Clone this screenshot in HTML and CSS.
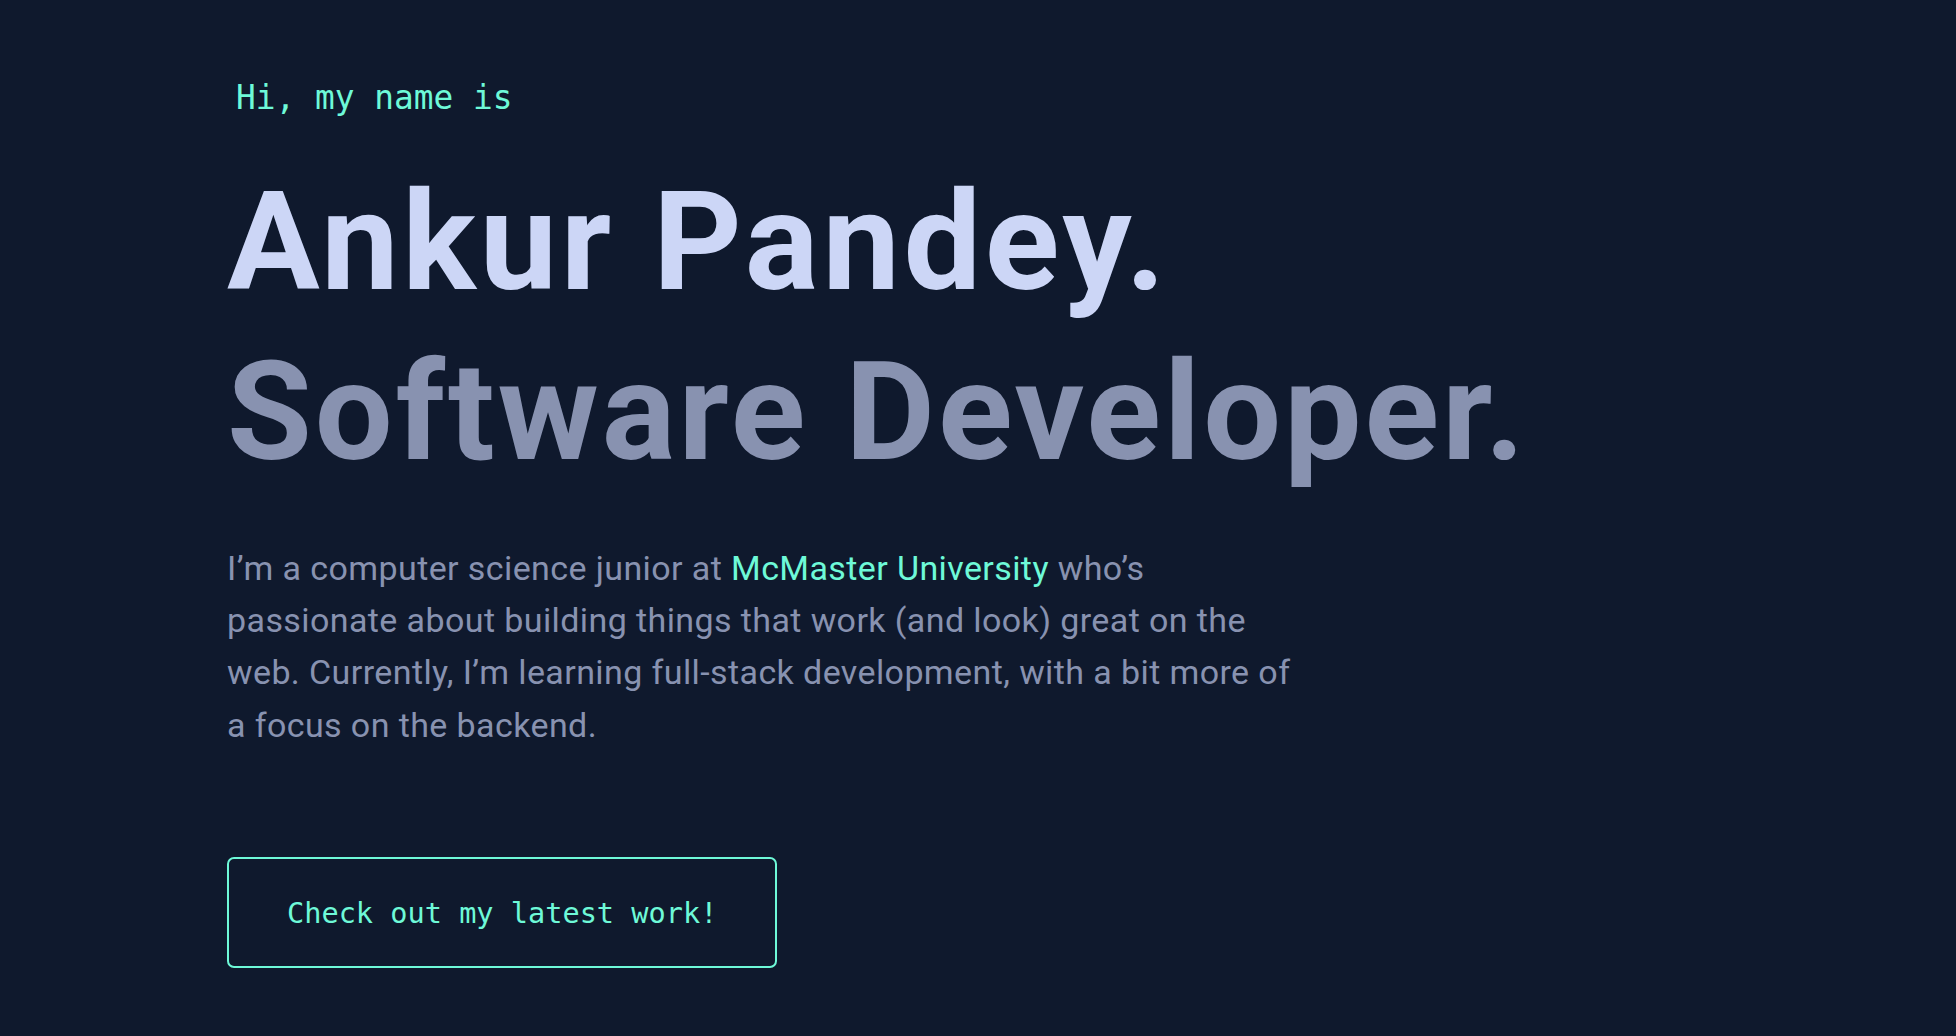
FILE: index.html
```html
<!DOCTYPE html>
<html lang="en">
<head>
<meta charset="utf-8">
<title>Ankur Pandey</title>
<link rel="stylesheet" href="styles.css">
</head>
<body>
<main class="hero">
  <h1 class="intro">Hi, my name is</h1>
  <h2 class="big-heading name">Ankur Pandey.</h2>
  <h3 class="big-heading role">Software Developer.</h3>
  <p class="about">I’m a computer science junior at <a class="link" href="#">McMaster University</a> who’s passionate about building things that work (and look) great on the web. Currently, I’m learning full-stack development, with a bit more of a focus on the backend.</p>
  <a class="cta" href="#">Check out my latest work!</a>
</main>
</body>
</html>
```

FILE: styles.css
```css
html, body {
  margin: 0;
  padding: 0;
}

body {
  background: #0f192d;
  width: 1956px;
  height: 1036px;
  overflow: hidden;
  font-family: Roboto, "Liberation Sans", sans-serif;
}

.hero {
  display: flex;
  flex-direction: column;
  align-items: flex-start;
  padding: 78px 0 0 227px;
}

.intro {
  margin: 0 0 0 9px;
  font-family: "DejaVu Sans Mono", monospace;
  font-weight: 400;
  font-size: 32.8px;
  line-height: 40px;
  color: #6ef9d8;
}

.big-heading {
  margin: 0;
  font-family: Roboto, "Liberation Sans", sans-serif;
  font-weight: 700;
  font-size: 138px;
  line-height: 170px;
  letter-spacing: 2.9px;
}

.name {
  margin-top: 38.5px;
  letter-spacing: 3.7px;
  color: #ccd6f6;
}

.role {
  color: #8892b0;
}

.about {
  margin: 45px 0 0 0;
  max-width: 1075px;
  font-size: 34px;
  line-height: 52.4px;
  letter-spacing: 0.4px;
  color: #8892b0;
}

.link {
  color: #6ef9d8;
  text-decoration: none;
}

.cta {
  margin-top: 106px;
  padding: 39.5px 58px 38.5px;
  border: 2px solid #6ef9d8;
  border-radius: 7px;
  font-family: "DejaVu Sans Mono", monospace;
  font-size: 28.6px;
  line-height: 1;
  color: #6ef9d8;
  text-decoration: none;
}
```
